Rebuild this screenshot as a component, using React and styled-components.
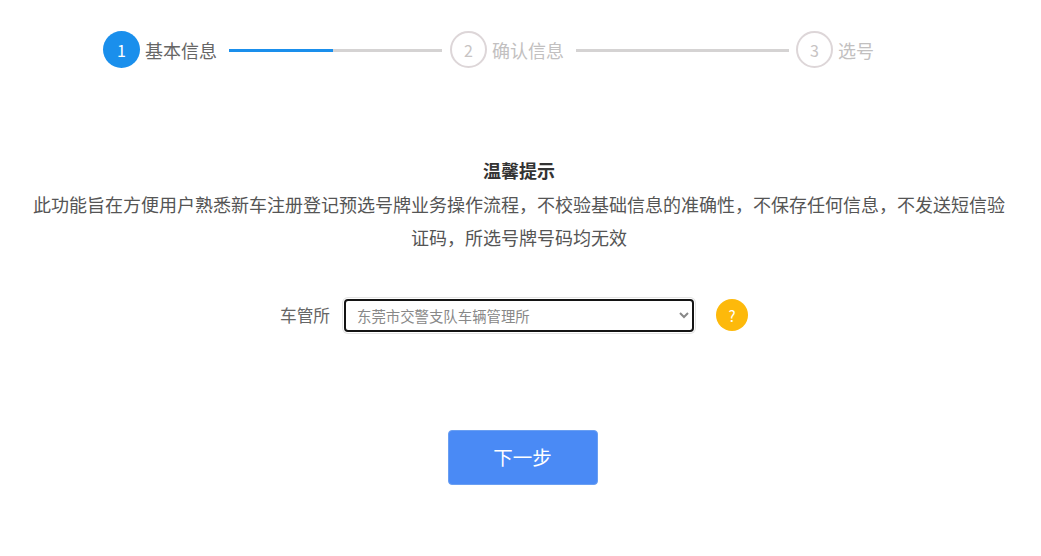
import React from "react";
import styled, { createGlobalStyle } from "styled-components";

const FONT = `"Noto Sans CJK SC", "Liberation Sans", sans-serif`;

const GlobalStyle = createGlobalStyle`
  html, body {
    margin: 0;
    padding: 0;
    background: #fff;
    font-family: ${FONT};
  }
`;

const Page = styled.div`
  width: 1041px;
  height: 556px;
  overflow: hidden;
  display: flex;
  flex-direction: column;
  align-items: center;
`;

const Steps = styled.div`
  width: 1041px;
  box-sizing: border-box;
  padding: 31px 0 0 103px;
  display: flex;
  align-items: center;
  height: 68px;
`;

const Circle = styled.div`
  width: 37px;
  height: 37px;
  box-sizing: border-box;
  border-radius: 50%;
  display: flex;
  align-items: center;
  justify-content: center;
  font-size: 16px;
  background: ${(p) => (p.$active ? "#1a8fec" : "#fff")};
  color: ${(p) => (p.$active ? "#fff" : "#c8c4c4")};
  border: ${(p) => (p.$active ? "none" : "2px solid #ddd6d8")};
`;

const StepName = styled.span`
  margin: 2px 0 0 5px;
  font-size: 18px;
  line-height: 37px;
  color: ${(p) => (p.$active ? "#666" : "#c2c0c0")};
`;

const Track = styled.div`
  width: 213px;
  height: 3px;
  margin: 1px ${(p) => p.$right}px 0 ${(p) => p.$left}px;
  background: linear-gradient(
    to right,
    #1a8fec ${(p) => p.$fill}%,
    #d5d3d3 ${(p) => p.$fill}%
  );
`;

const Notice = styled.div`
  margin: 86px 3px 0 0;
  width: 985px;
  text-align: center;
  font-size: 18px;
  line-height: 33.5px;
  color: #555;
`;

const NoticeTitle = styled.div`
  font-weight: 700;
  color: #333;
`;

const FormRow = styled.div`
  margin-top: 44px;
  width: 1041px;
  box-sizing: border-box;
  padding-left: 280px;
  display: flex;
  align-items: center;
`;

const FieldLabel = styled.label`
  width: 64px;
  font-size: 16.7px;
  color: #666;
`;

const StationSelect = styled.select`
  width: 350px;
  height: 33px;
  box-sizing: border-box;
  padding: 0 3px 0 7px;
  background: #fff;
  border: 2px solid #141414;
  border-radius: 4px;
  outline: none;
  box-shadow: 0 0 0 1px #fff, 0 0 0 2px #e4e4e4;
  font-family: ${FONT};
  font-size: 14.4px;
  color: #888;
`;

const HelpBadge = styled.div`
  margin-left: 22px;
  width: 32px;
  height: 32px;
  border-radius: 50%;
  background: #fdb90b;
  color: #fff;
  display: flex;
  align-items: center;
  justify-content: center;
  font-size: 15px;
`;

const NextButton = styled.button`
  margin: 98px 0 0 4px;
  padding: 0 0 2px;
  width: 150px;
  height: 55px;
  border: 1px solid #6a9ff2;
  border-radius: 4px;
  background: #4a8af5;
  color: #fff;
  font-family: ${FONT};
  font-size: 19.5px;
`;

const App = () => {
  return (
    <Page>
      <GlobalStyle />
      <Steps>
        <Circle $active>1</Circle>
        <StepName $active>基本信息</StepName>
        <Track $left={12} $right={8} $fill={49} />
        <Circle>2</Circle>
        <StepName>确认信息</StepName>
        <Track $left={12} $right={7} $fill={0} />
        <Circle>3</Circle>
        <StepName>选号</StepName>
      </Steps>
      <Notice>
        <NoticeTitle>温馨提示</NoticeTitle>
        此功能旨在方便用户熟悉新车注册登记预选号牌业务操作流程，不校验基础信息的准确性，不保存任何信息，不发送短信验证码，所选号牌号码均无效
      </Notice>
      <FormRow>
        <FieldLabel>车管所</FieldLabel>
        <StationSelect defaultValue="dg">
          <option value="dg">东莞市交警支队车辆管理所</option>
        </StationSelect>
        <HelpBadge>?</HelpBadge>
      </FormRow>
      <NextButton>下一步</NextButton>
    </Page>
  );
};

export default App;
